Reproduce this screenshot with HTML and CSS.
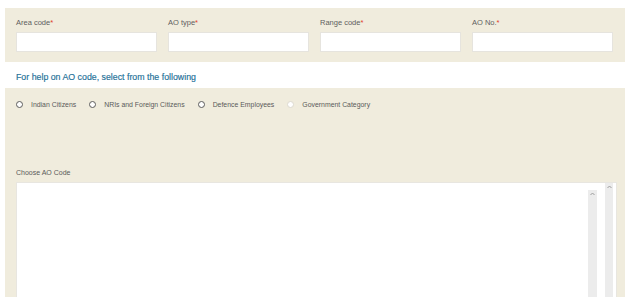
FILE: index.html
```html
<!DOCTYPE html>
<html lang="en">
<head>
    <meta charset="UTF-8">
    <meta name="viewport" content="width=device-width, initial-scale=1.0">
    <title>AO Code</title>
    <link rel="stylesheet" href="styles.css">
</head>
<body>
    <div class="page">
        <section class="panel fields">
            <div class="field">
                <label>Area code<span class="req">*</span></label>
                <input type="text">
            </div>
            <div class="field">
                <label>AO type<span class="req">*</span></label>
                <input type="text">
            </div>
            <div class="field">
                <label>Range code<span class="req">*</span></label>
                <input type="text">
            </div>
            <div class="field">
                <label>AO No.<span class="req">*</span></label>
                <input type="text">
            </div>
        </section>
        <p class="help">For help on AO code, select from the following</p>
        <section class="panel lookup">
            <div class="radios">
                <span class="option"><span class="dot"></span>Indian Citizens</span>
                <span class="option"><span class="dot"></span>NRIs and Foreign Citizens</span>
                <span class="option"><span class="dot"></span>Defence Employees</span>
                <span class="option"><span class="dot off"></span>Government Category</span>
            </div>
            <div class="choose">Choose AO Code</div>
            <div class="code-box">
                <div class="code-list">
                    <div class="scroll">
                        <svg class="arrow" width="5" height="4" viewBox="0 0 5 4"><path d="M0.5 3 L2.5 1 L4.5 3" fill="none" stroke="#9c9c9c" stroke-width="1"/></svg>
                    </div>
                </div>
                <div class="scroll outer">
                    <svg class="arrow" width="5" height="4" viewBox="0 0 5 4"><path d="M0.5 3 L2.5 1 L4.5 3" fill="none" stroke="#9c9c9c" stroke-width="1"/></svg>
                </div>
            </div>
        </section>
    </div>
</body>
</html>
```
FILE: styles.css
```css
body {
    margin: 0;
    padding: 0;
    background: #ffffff;
    font-family: "Liberation Sans", Arial, sans-serif;
    color: #5a5a5a;
}
.page {
    padding: 8px 5px 0 5px;
}
.panel {
    background: #f0ecdd;
}
.fields {
    display: grid;
    grid-template-columns: repeat(4, 141px);
    column-gap: 11px;
    padding: 10px 12px 10px 11px;
}
.field label {
    display: block;
    font-size: 7.5px;
    line-height: 10px;
    margin-bottom: 4px;
    color: #5e5e5e;
}
.req {
    color: #e0402a;
}
.field input {
    display: block;
    box-sizing: border-box;
    width: 141px;
    height: 20px;
    margin: 0;
    border: 1px solid #e6e4de;
    background: #ffffff;
}
.help {
    margin: 0;
    padding: 3px 0 0 11px;
    height: 23px;
    line-height: 25px;
    font-size: 8.8px;
    color: #1d6f97;
    -webkit-text-stroke: 0.15px #1d6f97;
}
.lookup {
    padding: 11px 8px 0 11px;
}
.radios {
    display: flex;
    align-items: center;
    height: 10px;
    font-size: 6.9px;
    color: #5a5a5a;
}
.option {
    display: flex;
    align-items: center;
    margin-right: 13px;
}
.dot {
    box-sizing: border-box;
    width: 7px;
    height: 7px;
    border: 1.5px solid #5c5c5c;
    border-radius: 50%;
    background: #ffffff;
    margin-right: 8px;
}
.dot.off {
    border-color: #dddad0;
}
.choose {
    margin-top: 59px;
    font-size: 7px;
    line-height: 9px;
    color: #5a5a5a;
}
.code-box {
    display: flex;
    margin-top: 5px;
    height: 115px;
    background: #ffffff;
    border: 1px solid #e8e6e0;
    border-bottom: none;
    padding: 0 3px 0 0;
}
.code-list {
    flex: 1;
    display: flex;
    justify-content: flex-end;
    margin-top: 7px;
    padding-right: 8px;
}
.scroll {
    width: 9px;
    background: #ececec;
    display: flex;
    justify-content: center;
    align-items: flex-start;
}
.scroll.outer {
    width: 8px;
}
.arrow {
    display: block;
    margin-top: 2px;
}
```
